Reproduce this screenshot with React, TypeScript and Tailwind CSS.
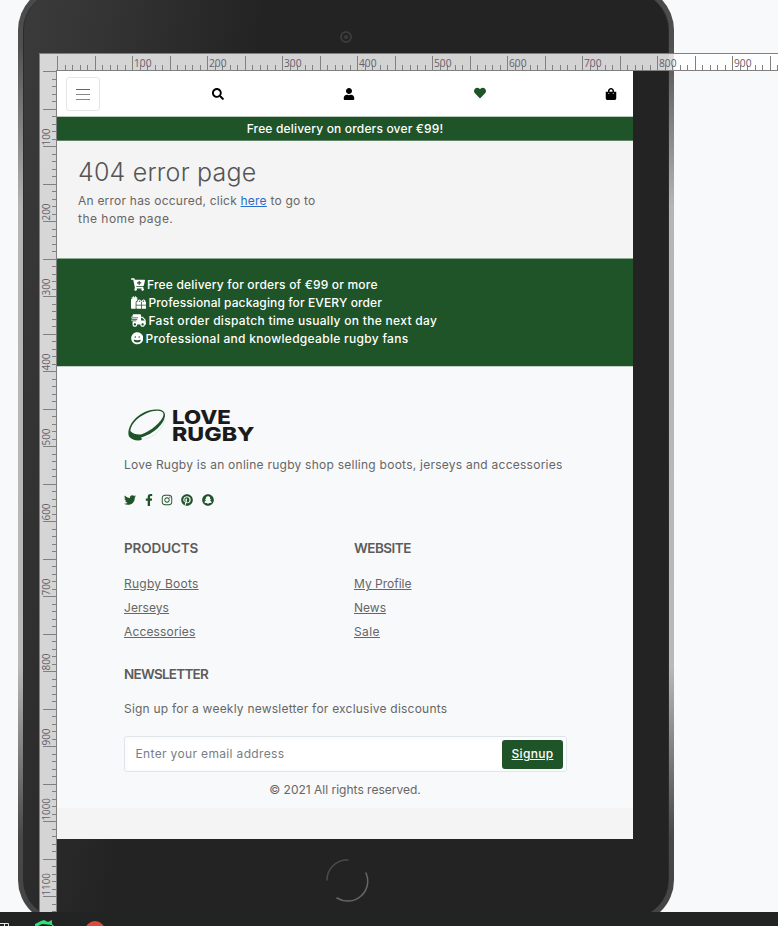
import type { ReactNode } from "react";
import {
  FaSearch, FaUser, FaHeart, FaShoppingBag, FaCartPlus, FaGifts, FaShippingFast, FaGrin,
  FaTwitter, FaFacebookF, FaInstagram, FaPinterest, FaSnapchat,
} from "react-icons/fa";

function T({ className = "", children }: { className?: string; children: ReactNode }) {
  return <span className={`whitespace-nowrap ${className}`}>{children}</span>;
}

const TICK = 7.5;

function Ruler() {
  const horizontal = Array.from({ length: 97 }, (_, i) => i);
  const vertical = Array.from({ length: 113 }, (_, i) => i);
  return (
    <svg className="pointer-events-none absolute left-[39px] top-[53px]" width="739" height="859" shapeRendering="crispEdges">
      <path d="M0 0H739V18H18V859H0Z" fill="#fff" fillOpacity=".8" />
      <path d="M0 0H739V1H1V859H0ZM17 17H739V18H18V859H17Z" fill="#808080" />
      {horizontal.map((i) => {
        const major = i % 5 === 0;
        return <rect key={i} x={Math.round(18 + i * TICK)} y={major ? 3 : 12} width="1" height={major ? 14 : 5} fill="#808080" />;
      })}
      {vertical.map((i) => {
        const major = i % 5 === 0;
        return <rect key={i} y={Math.round(18 + i * TICK)} x={major ? 4 : 13} height="1" width={major ? 13 : 4} fill="#808080" />;
      })}
      <g fill="#66606a" fontFamily="'Open Sans', 'Noto Sans', sans-serif" fontSize="11">
        {[100, 200, 300, 400, 500, 600, 700, 800, 900].map((n) => (
          <text key={n} x={20 + n * 0.75} y="14" textLength="17.5" lengthAdjust="spacingAndGlyphs">{n}</text>
        ))}
        {[100, 200, 300, 400, 500, 600, 700, 800, 900, 1000, 1100].map((n) => (
          <text key={n} transform={`translate(11 ${17.5 + n * 0.75}) rotate(-90)`} textLength={n > 999 ? 22.5 : 17} lengthAdjust="spacingAndGlyphs">{n}</text>
        ))}
      </g>
    </svg>
  );
}

function Logo() {
  return (
    <div className="flex h-10 items-start">
      <svg width="48" height="40" viewBox="0 0 48 40" className="block shrink-0">
        <path fillRule="evenodd" fill="#1f5429" d="M5 33.500C2 24 12 11 25 7.500C35 5 41 7 41 12C41 20 30 31 17 34.500Q19 37 16 37.300Q9 38 5 33.500ZM6.300 28Q10 32 17 31.500C27 28 38 19 39.500 12C40 8 34 7 27 8.500C16 12 7 20 6.300 28Z" />
        <path d="M41 16C39 27 29 34 21 36" fill="none" stroke="#dde3df" strokeWidth=".8" />
      </svg>
      <div className="pt-[6px] text-[19px] leading-[17px] font-extrabold text-[#1b1b1b]">
        <div className="w-max origin-left scale-x-[1.17]">LOVE</div>
        <div className="w-max origin-left scale-x-[1.22]">RUGBY</div>
      </div>
    </div>
  );
}

function Header() {
  return (
    <>
      <nav className="flex h-[46px] items-center justify-between border-b border-[#b9c9bc] bg-white pl-[9px] pr-4 pt-px text-black">
        <button className="-mr-[7px] flex h-[34px] w-[34px] flex-col items-center justify-center gap-1 rounded-[3px] border border-[#e6e6e6]">
          <span className="h-px w-3.5 bg-[#666]" />
          <span className="h-px w-3.5 bg-[#888]" />
          <span className="h-px w-3.5 bg-[#888]" />
        </button>
        <FaSearch size={12} />
        <FaUser size={12} />
        <FaHeart size={12} className="relative -top-px text-[#1f5429]" />
        <FaShoppingBag size={12} />
      </nav>
      <div className="flex h-6 items-center justify-center border-b border-[#5f8366] bg-[#1f5429] text-xs font-medium text-white">
        <T className="tracking-[0.17px]">Free delivery on orders over €99!</T>
      </div>
    </>
  );
}

function ErrorMessage() {
  return (
    <main className="h-[118px] border-b border-[#8ea994] bg-[#f4f4f4] pl-[21px] pt-[18px] text-[#666]">
      <h1 className="h-[33px] text-[25px] leading-[27px] font-light text-[#555]"><T className="tracking-[0.2px]">404 error page</T></h1>
      <p className="text-xs leading-[18px]">
        <T className="tracking-[0.22px]">An error has occured, click <a className="text-[#2a6cc8] underline">here</a> to go to</T>
        <br />
        <T className="tracking-[0.48px]">the home page.</T>
      </p>
    </main>
  );
}

function Features() {
  return (
    <section className="h-[107px] bg-[#1f5429] pl-[73.5px] pt-[17px] text-xs leading-[18px] font-medium text-white">
      <div className="flex items-center gap-[2.5px]"><FaCartPlus className="-mt-px h-[13px] w-[14px]" /><T className="tracking-[0.19px]">Free delivery for orders of €99 or more</T></div>
      <div className="flex items-center gap-[2.5px]"><FaGifts className="-mt-px h-[13px] w-[15.5px]" /><T className="tracking-[0.11px]">Professional packaging for EVERY order</T></div>
      <div className="flex items-center gap-[2.5px]"><FaShippingFast className="-mt-px h-[13px] w-[15.5px]" /><T className="tracking-[0.3px]">Fast order dispatch time usually on the next day</T></div>
      <div className="flex items-center gap-[2.5px]"><FaGrin size={12.5} className="-mt-px" /><T className="tracking-[0.3px]">Professional and knowledgeable rugby fans</T></div>
    </section>
  );
}

function Footer() {
  return (
    <footer className="h-[442px] border-t border-[#c3cfc7] bg-[#f8f9fb] pl-[67px] pr-[67px] pt-9 text-xs text-[#666]">
      <Logo />
      <p className="mt-[13px] h-[18px] leading-[18px]"><T className="tracking-[0.25px]">Love Rugby is an online rugby shop selling boots, jerseys and accessories</T></p>
      <div className="-ml-[0.5px] mt-[20px] flex h-3 items-center text-[#1f5429]">
        <FaTwitter size={12} />
        <FaFacebookF size={12} className="ml-[7px]" />
        <FaInstagram size={12} className="ml-[6px]" />
        <FaPinterest size={12} className="ml-2" />
        <FaSnapchat size={12} className="ml-[9px]" />
      </div>
      <div className="mt-[33px] flex">
        <div className="w-[230px]">
          <h2 className="h-[18px] text-[13.5px] leading-[18px] font-semibold text-[#5c5c5c]"><T className="tracking-[-0.12px]">PRODUCTS</T></h2>
          <ul className="mt-[15px] leading-6 underline">
            <li><T className="tracking-[0.25px]">Rugby Boots</T></li>
            <li><T className="tracking-[0.07px]">Jerseys</T></li>
            <li><T className="tracking-[0.15px]">Accessories</T></li>
          </ul>
        </div>
        <div>
          <h2 className="h-[18px] text-[13.5px] leading-[18px] font-semibold text-[#5c5c5c]"><T className="tracking-[-0.5px]">WEBSITE</T></h2>
          <ul className="mt-[15px] leading-6 underline">
            <li><T>My Profile</T></li>
            <li><T>News</T></li>
            <li><T className="tracking-[0.4px]">Sale</T></li>
          </ul>
        </div>
      </div>
      <h2 className="mt-[21px] h-[18px] text-[13.5px] leading-[18px] font-semibold text-[#5c5c5c]"><T className="tracking-[-0.75px]">NEWSLETTER</T></h2>
      <p className="mt-[17px] h-[18px] leading-[18px]"><T className="tracking-[0.22px]">Sign up for a weekly newsletter for exclusive discounts</T></p>
      <form className="mt-[18px] flex h-9 w-[443px] items-center rounded-[3px] border border-[#e2e5e8] bg-[#fbfcfd] p-[3px]">
        <div className="flex h-[29px] flex-1 items-center bg-white pl-[7.5px] text-[#777e85]"><T className="tracking-[0.35px]">Enter your email address</T></div>
        <button type="button" className="h-[29px] w-[61px] rounded-[3px] bg-[#1f5429] font-medium text-white underline"><T className="tracking-[0.3px]">Signup</T></button>
      </form>
      <p className="mt-[9px] text-center leading-[18px]"><T>© 2021 All rights reserved.</T></p>
    </footer>
  );
}

export default function App() {
  return (
    <div className="relative h-[926px] w-[778px] overflow-hidden bg-[#f8f9fb] font-[Inter,'Open_Sans',sans-serif]">
      <div className="absolute -top-[14px] left-[18px] h-[938px] w-[655.500px] rounded-[44px] bg-[linear-gradient(180deg,#484848_0,#505050_60px,#b5b5b5_220px,#b9b9b9_680px,#484848_850px,#444_100%)] px-[5px] py-[6px]">
        <div className="h-full rounded-[38px] border-x border-[#2c2c2c] bg-[linear-gradient(100deg,#3b3b3b_0,#343434_80px,#232323_240px)]" />
      </div>
      <div className="absolute left-[340px] top-[31px] flex h-3 w-3 items-center justify-center rounded-full border-2 border-[#3b3b3b]">
        <span className="h-1 w-1 rounded-full bg-[#3b3b3b]" />
      </div>
      <div className="absolute left-[57px] top-[71px] h-[768px] w-[576px] bg-[#f4f4f4]">
        <Header />
        <ErrorMessage />
        <Features />
        <Footer />
      </div>
      <svg className="absolute left-[325px] top-[858px]" width="44" height="44" fill="none" strokeWidth="1.5" strokeLinecap="round">
        <path d="M2 22A20 20 0 0 1 23 2" stroke="#4b4b4b" />
        <path d="M41 15A20 20 0 0 1 12 40" stroke="#666" />
      </svg>
      <Ruler />
      <div className="absolute inset-x-0 bottom-0 h-[14px] bg-[#222423]">
        <svg width="120" height="14">
          <path d="M0 11.5H8.500V14M4.500 11.500V14" fill="none" stroke="#dce8e0" />
          <path d="M35 14V12L41 9L44 8L48 10L52 8V12L54 14Z" fill="#2fe07a" />
          <path d="M38 14L42 12L52 13V14Z" fill="#102015" />
          <circle cx="95" cy="19" r="10" fill="#dc4c3e" />
        </svg>
      </div>
    </div>
  );
}
